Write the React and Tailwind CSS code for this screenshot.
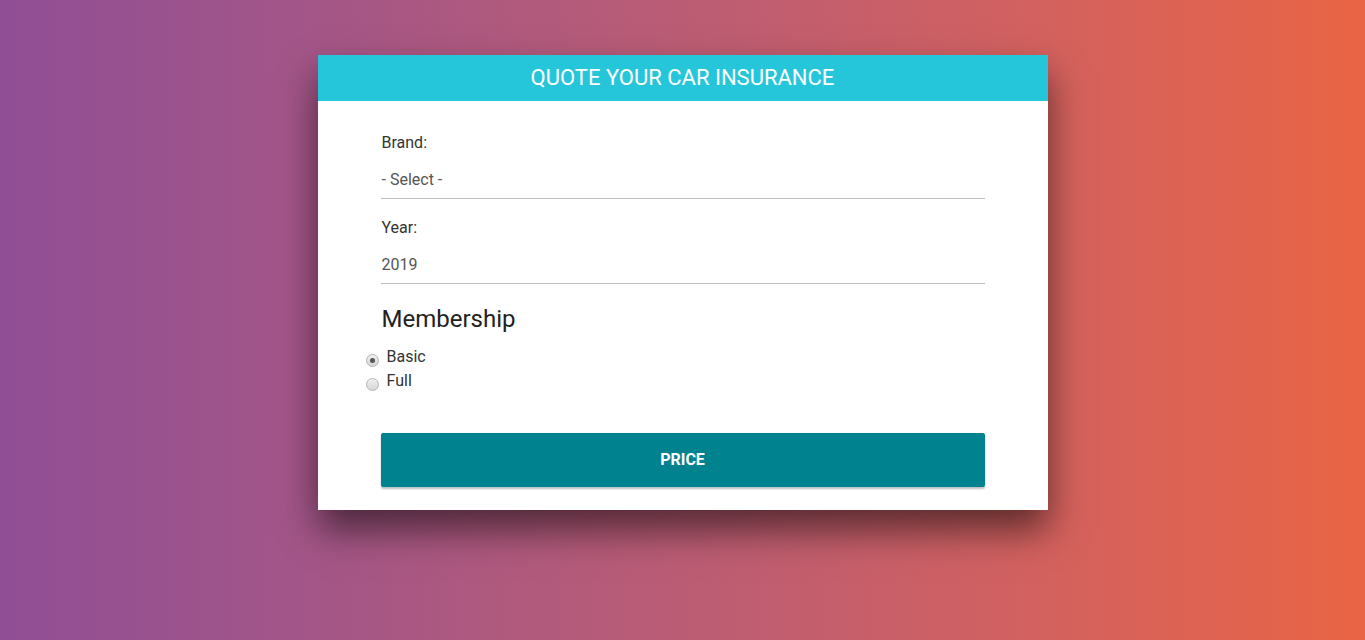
import React from "react";

function Radio({ checked, label }) {
  return (
    <label className="flex items-center h-[24px] -ml-[16px]">
      <span className="relative w-[13px] h-[13px] mt-[6px] rounded-full border border-[#b5b5b5] bg-gradient-to-b from-[#f0f0f0] to-[#d6d6d6] flex items-center justify-center">
        {checked && <span className="w-[5px] h-[5px] rounded-full bg-[#555]" />}
      </span>
      <span className="ml-[8px] text-[16px] text-[#333]">{label}</span>
    </label>
  );
}

export default function App() {
  return (
    <div
      className="min-h-[640px] w-full bg-gradient-to-r from-[#904e95] to-[#e96443] pt-[55px]"
      style={{ fontFamily: "Roboto, 'Noto Sans', sans-serif" }}
    >
      <div className="w-[730px] mx-auto bg-white shadow-[0_20px_35px_rgba(0,0,0,0.55)]">
        <div className="h-[46px] pb-[2px] bg-[#26c6da] flex items-center justify-center text-white text-[22px] uppercase">
          Quote your car insurance
        </div>
        <div className="pl-[64px] pr-[63px] pt-[30px] pb-[23px]">
          <div className="text-[16px] leading-[24px] text-[#333]">Brand:</div>
          <div className="-ml-[1px] mt-[6px] h-[38px] border-b border-[#bdbdbd] flex items-center text-[16px] text-[#555]">
            <span className="ml-[1px]">- Select -</span>
          </div>
          <div className="mt-[17px] text-[16px] leading-[24px] text-[#333]">Year:</div>
          <div className="-ml-[1px] mt-[6px] h-[38px] border-b border-[#bdbdbd] flex items-center text-[16px] text-[#555]">
            <span className="ml-[1px]">2019</span>
          </div>
          <div className="mt-[21px] text-[24px] leading-[29px] text-[#222]">Membership</div>
          <div className="mt-[11px] flex flex-col">
            <Radio checked label="Basic" />
            <Radio label="Full" />
          </div>
          <button className="-ml-[1px] mt-[40px] w-[calc(100%+1px)] h-[54px] bg-[#00838f] rounded-[2px] text-white font-bold text-[16px] uppercase shadow-[0_2px_2px_rgba(0,0,0,0.25)]">
            Price
          </button>
        </div>
      </div>
    </div>
  );
}
